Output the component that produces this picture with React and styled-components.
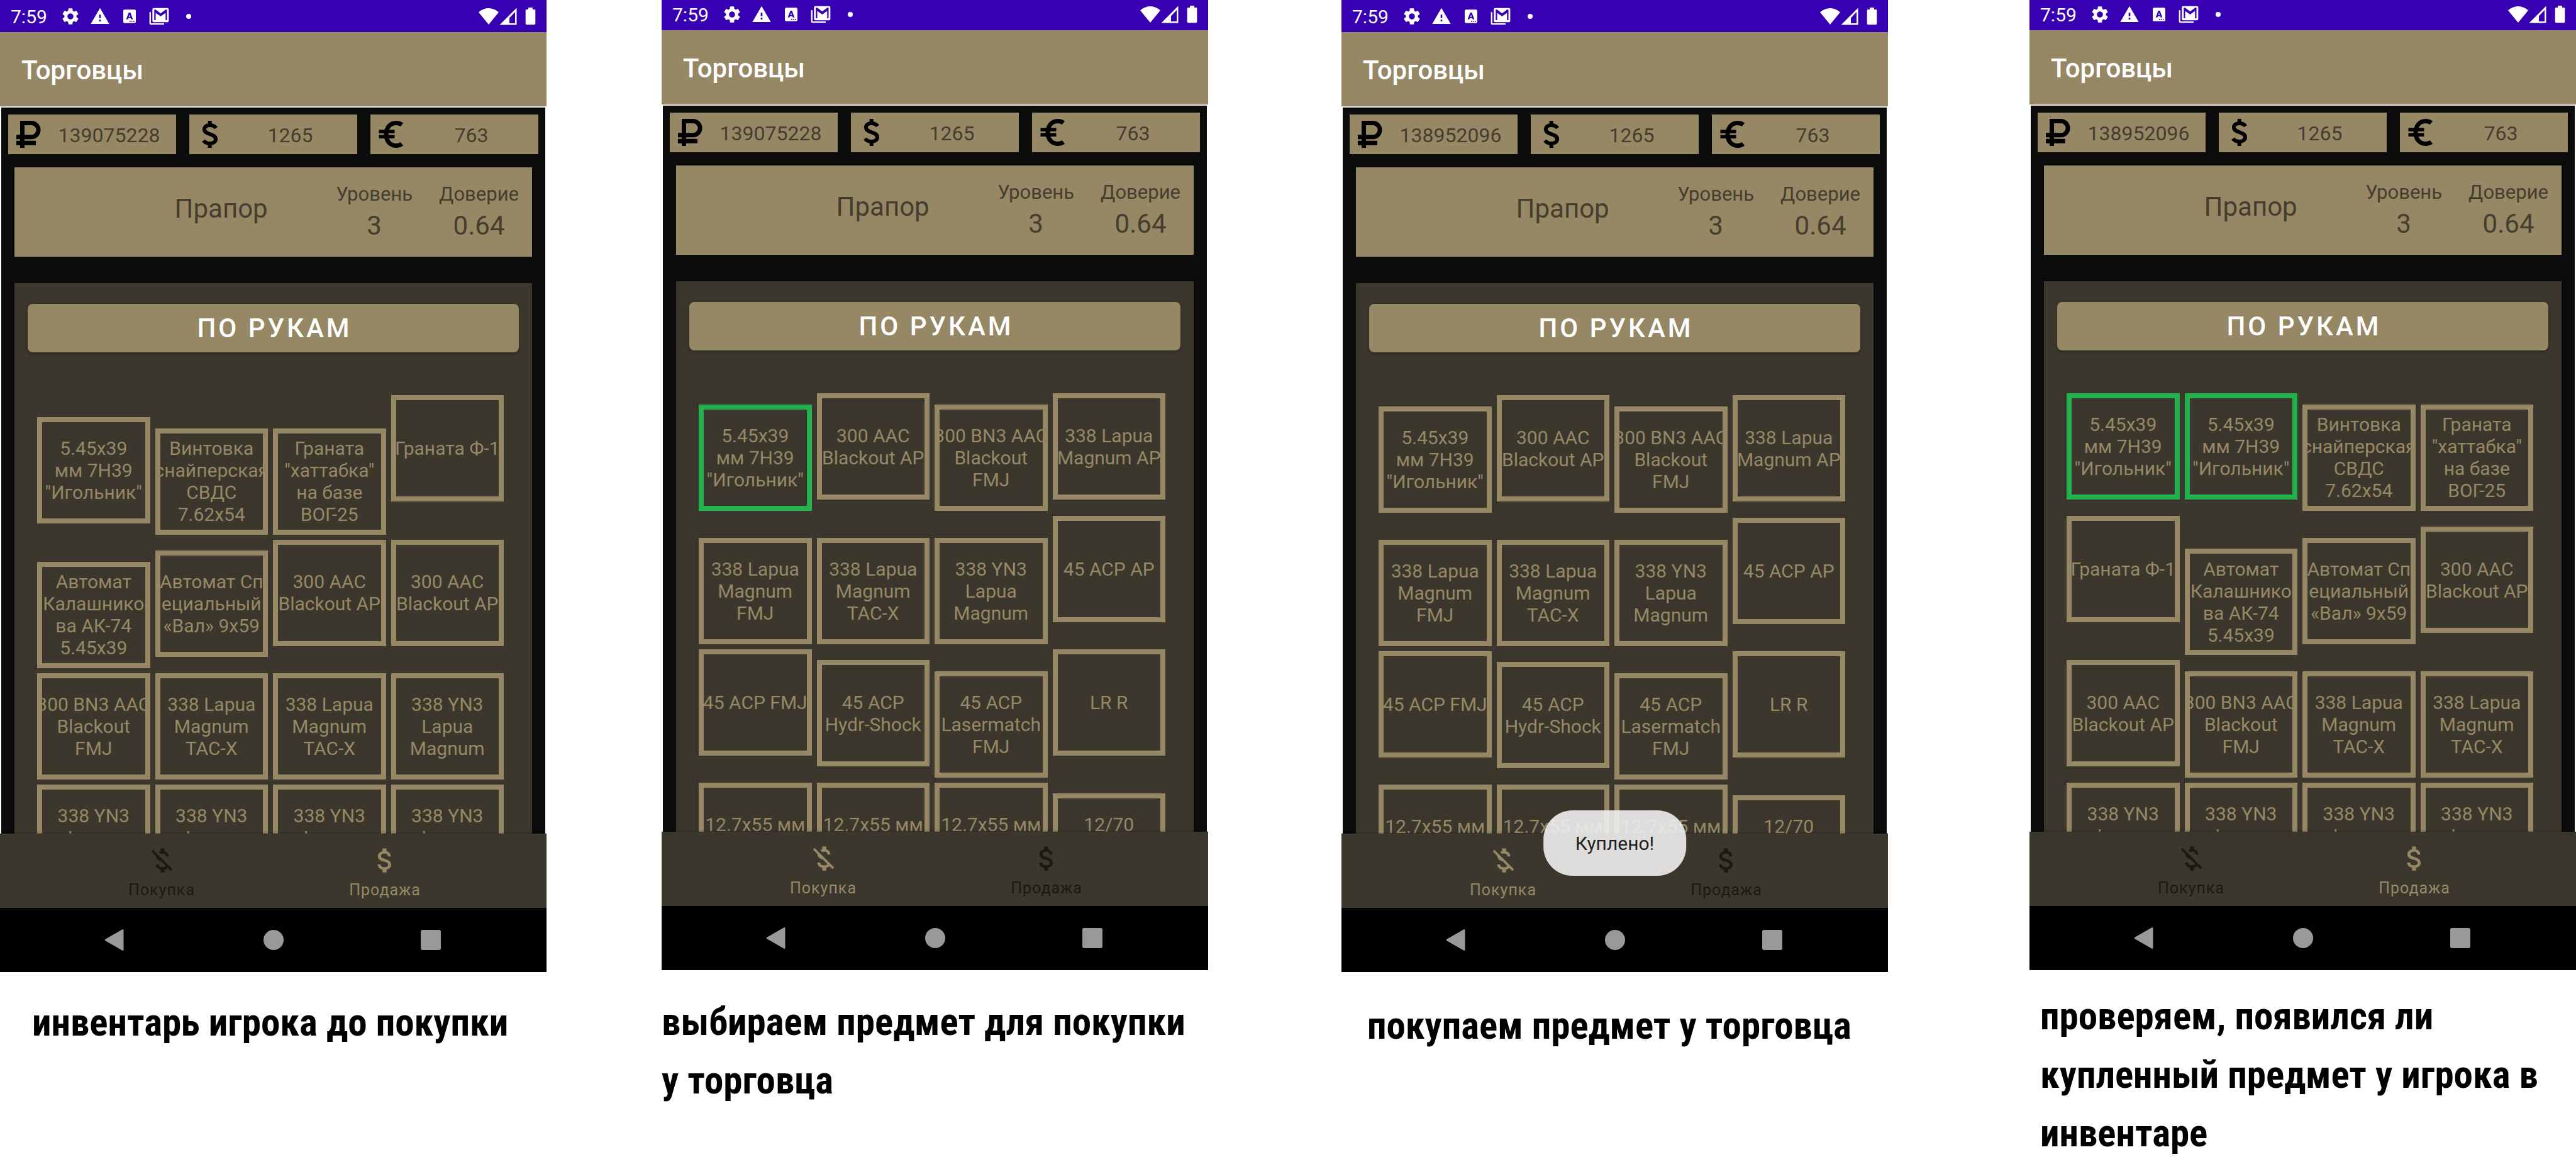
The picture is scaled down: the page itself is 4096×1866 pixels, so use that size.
import React from "react";
import styled, { createGlobalStyle } from "styled-components";
import { MdSettings, MdWarning, MdAttachMoney, MdMoneyOff } from "react-icons/md";

const color = {
  khaki: "#968765",
  panel: "#3c372d",
  ink: "#0b0b0b",
  textOnKhaki: "#453e2e",
  primaryDark: "#3700b3",
  picked: "#22b14c",
  system: "#999999",
  active: "#1b1915",
};

const GlobalStyle = createGlobalStyle`
  *, *::before, *::after { box-sizing: border-box; }
  body { margin: 0; background: #fff; font-family: Roboto, "Noto Sans", sans-serif; overflow: hidden; }
  button { font: inherit; color: inherit; background: none; border: 0; padding: 0; margin: 0; cursor: pointer; }
  h1, h2, p, dl, dt, dd { margin: 0; font: inherit; }
`;

const Board = styled.main`
  display: grid;
  grid-template-columns: 869fr 183fr 869fr 212fr 869fr 225fr 869fr;
  align-items: start;
`;

const Step = styled.figure`
  margin: 0;
  grid-column: ${(p) => p.$column};
`;

const Phone = styled.section`
  position: relative;
  display: flex;
  flex-direction: column;
  aspect-ratio: 9 / 16;
  margin-top: ${(p) => (p.$trimmed ? "-3px" : "0")};
  background: #fff;
  overflow: hidden;
`;

const StatusBar = styled.div`
  flex: none;
  display: flex;
  align-items: center;
  justify-content: space-between;
  height: 51px;
  padding: 0 11px 0 17px;
  background: ${color.primaryDark};
  color: #fff;
  font-size: 30px;
  line-height: 36px;
`;

const Notifications = styled.div`
  display: flex;
  align-items: center;
  gap: 15px;
  svg { display: block; width: 32px; height: 32px; }
`;

const Clock = styled.time`
  width: 64px;
  padding-top: 3px;
`;

const Signals = styled.div`
  display: flex;
  align-items: center;
  svg { display: block; height: 32px; }
  svg:last-child { margin-left: 5px; }
`;

const AppBar = styled.header`
  flex: none;
  display: flex;
  align-items: center;
  height: 118px;
  padding: 4px 34px 0;
  background: ${color.khaki};
`;

const AppTitle = styled.h1`
  color: #fff;
  font-size: 42px;
  font-weight: 500;
  line-height: 50px;
`;

const Body = styled.div`
  flex: 1;
  min-height: 0;
  display: flex;
  flex-direction: column;
  margin: 0 2px;
  border-top: 2px solid #e4e4e8;
  background: ${color.ink};
`;

const Wallet = styled.div`
  display: grid;
  grid-template-columns: repeat(3, 1fr);
  gap: 21px;
  padding: 11px 11px 0;
`;

const Purse = styled.div`
  display: flex;
  align-items: center;
  height: 63px;
  padding-left: 11px;
  background: ${color.khaki};
  color: ${color.textOnKhaki};
  font-size: 32px;
  line-height: 38px;
  svg { flex: none; display: block; width: 43px; height: 43px; }
  span { flex: 1; padding-top: 2px; text-align: center; }
`;

const Trader = styled.div`
  display: flex;
  align-items: center;
  gap: 42px;
  height: 142px;
  margin: 21px 21px 42px;
  padding-right: 21px;
  background: ${color.khaki};
  color: ${color.textOnKhaki};
`;

const TraderName = styled.h2`
  flex: 1;
  padding: 0 0 10px 188px;
  text-align: center;
  font-size: 42px;
  line-height: 50px;
`;

const Stat = styled.dl`
  display: grid;
  gap: 6px;
  text-align: center;
  dt { font-size: 31px; line-height: 38px; }
  dd { font-size: 42px; line-height: 50px; }
`;

const Panel = styled.div`
  flex: 1;
  min-height: 0;
  display: flex;
  flex-direction: column;
  margin: 0 21px;
  padding: 33px 21px 0;
  background: ${color.panel};
  overflow: hidden;
`;

const DealButton = styled.button`
  flex: none;
  height: 77px;
  padding-left: 4px;
  border-radius: 8px;
  background: ${color.khaki};
  box-shadow: 0 2px 5px rgba(0, 0, 0, 0.3);
  color: #fff;
  font-size: 42px;
  font-weight: 500;
  line-height: 50px;
  letter-spacing: 4px;
`;

const Items = styled.div`
  display: grid;
  grid-template-columns: repeat(4, 1fr);
  gap: 8px;
  align-items: baseline;
  padding: 68px 24px 0 15px;
`;

const Item = styled.button`
  display: flex;
  align-items: center;
  justify-content: center;
  height: 169px;
  min-width: 0;
  border: 8px solid ${(p) => (p.$picked ? color.picked : color.khaki)};
  color: ${color.khaki};
  font-size: 30px;
  line-height: 35px;
  text-align: center;
  white-space: pre;
  overflow: clip;
`;

const Tabs = styled.nav`
  flex: none;
  display: flex;
  justify-content: center;
  height: 118px;
  background: ${color.panel};
  box-shadow: 0 -1px 3px rgba(0, 0, 0, 0.25);
`;

const Tab = styled.button`
  display: flex;
  flex-direction: column;
  align-items: center;
  width: 355px;
  padding-top: 17px;
  gap: 7px;
  color: ${(p) => (p.$current ? color.active : color.khaki)};
  font-size: 25px;
  line-height: 30px;
  letter-spacing: 1px;
  svg { display: block; width: 51px; height: 51px; }
`;

const SystemKeys = styled.div`
  flex: none;
  display: flex;
  justify-content: center;
  height: 102px;
  background: #000;
`;

const SystemKey = styled.button`
  display: flex;
  align-items: center;
  justify-content: center;
  width: 251px;
  color: ${color.system};
  svg { display: block; width: 36px; height: 36px; }
`;

const Toast = styled.div`
  position: absolute;
  left: 50%;
  bottom: 153px;
  transform: translateX(-50%);
  display: flex;
  align-items: center;
  height: 104px;
  padding: 2px 51px 0;
  border-radius: 46px;
  background: rgba(239, 239, 239, 0.9);
  color: #1f1f1f;
  font-size: 30px;
  line-height: 35px;
`;

const Caption = styled.figcaption`
  padding: ${(p) => p.$top}px 0 0 ${(p) => p.$left}px;
  color: #000;
  font-family: "Roboto Condensed", "Liberation Sans Narrow", "Open Sans Condensed", Roboto, sans-serif;
  font-size: 61px;
  font-weight: 700;
  line-height: 93px;
  white-space: pre;
`;

const KeyboardIcon = () => (
  <svg viewBox="0 0 24 24" fill="currentColor" aria-hidden="true">
    <path fillRule="evenodd" d="M6 4h12a1.500 1.500 0 0 1 1.500 1.500v13A1.500 1.500 0 0 1 18 20H6a1.500 1.500 0 0 1-1.500-1.500v-13A1.500 1.500 0 0 1 6 4zM11 7.500 8 15.500h2l.5-1.500h3l.5 1.500h2L13 7.500zm1 2.500.9 2.500h-1.800zM12 17.300v1.200h1.200v-1.200zm2.200 0v1.200h1.200v-1.200zm2.200 0v1.200h1.200v-1.200z" />
  </svg>
);

const MailStackIcon = () => (
  <svg viewBox="0 0 24 24" fill="currentColor" aria-hidden="true">
    <path d="M.5 7h1.700v13.300H18V22H2A1.500 1.500 0 0 1 .5 20.500z" />
    <path fillRule="evenodd" d="M5.500 2h16.500A1.500 1.500 0 0 1 23.500 3.500v14A1.500 1.500 0 0 1 22 19H5.500A1.500 1.500 0 0 1 4 17.500v-14A1.500 1.500 0 0 1 5.500 2zM6.200 4v12.500h1.700V7.800l5.900 4.200 5.900-4.200v8.700h1.700V4h-1.600l-6 4.500L7.800 4z" />
  </svg>
);

const DotIcon = () => (
  <svg viewBox="0 0 24 24" fill="currentColor" aria-hidden="true"><circle cx="12" cy="12" r="3" /></svg>
);

const WifiIcon = () => (
  <svg viewBox="0 0 32 32" width="32" fill="currentColor" aria-hidden="true">
    <path d="M0 9.500C9 .8 23 .8 32 9.500L16 29z" />
  </svg>
);

const CellIcon = () => (
  <svg viewBox="0 0 30 32" width="30" fill="currentColor" aria-hidden="true">
    <path fillRule="evenodd" d="M28.500 2.500v27H1.500zM26 9 17 18.500v8.500h9z" />
  </svg>
);

const BatteryIcon = () => (
  <svg viewBox="0 0 30 32" width="30" fill="currentColor" aria-hidden="true">
    <path d="M12 2h7v3h2.500A1.800 1.800 0 0 1 23.300 6.800v20.600a1.800 1.800 0 0 1-1.800 1.800h-12a1.800 1.800 0 0 1-1.800-1.800V6.800A1.800 1.800 0 0 1 9.500 5H12z" />
  </svg>
);

const RubleIcon = () => (
  <svg viewBox="0 0 43 43" aria-hidden="true">
    <path d="M11.500 43V3.500H26a11 11 0 0 1 0 22.200H2M2 35.200h31" fill="none" stroke="#000" strokeWidth="7" />
  </svg>
);

const DollarIcon = () => (
  <svg viewBox="0 0 43 43" aria-hidden="true">
    <path d="M31.500 11.500C29.500 8.500 26 7 21.500 7c-5 0-8.500 2.500-8.500 6.500 0 9 18 6.500 18 15.500 0 4.500-4 7-9 7-4.500 0-8-1.500-10.500-4.800M21.700 0v8M21.700 35v8" fill="none" stroke="#000" strokeWidth="6" />
  </svg>
);

const EuroIcon = () => (
  <svg viewBox="0 0 43 43" aria-hidden="true">
    <path d="M39 6.200C36.500 4.300 33.500 3.500 29.500 3.500c-9 0-15.500 7.200-15.500 18s6.500 18 15.500 18c4 0 7-.8 9.500-2.700" fill="none" stroke="#000" strokeWidth="7" />
    <path d="M2.500 17h25M2.500 25.300h25" fill="none" stroke="#000" strokeWidth="5.500" />
  </svg>
);

const BackIcon = () => (
  <svg viewBox="0 0 36 36" fill="currentColor" aria-hidden="true">
    <path d="M28.500 1.300a1.500 1.500 0 0 1 2 1.400v30.600a1.500 1.500 0 0 1-2 1.400L1.500 19.200a1.400 1.400 0 0 1 0-2.400z" />
  </svg>
);

const HomeIcon = () => (
  <svg viewBox="0 0 36 36" fill="currentColor" aria-hidden="true"><circle cx="18" cy="18" r="16" /></svg>
);

const RecentIcon = () => (
  <svg viewBox="0 0 36 36" fill="currentColor" aria-hidden="true"><rect x="1" y="2" width="32" height="32" rx="3" /></svg>
);

const needle = '5.45x39\nмм 7H39\n"Игольник"';
const svds = "Винтовка\nснайперская\nСВДС\n7.62x54";
const hattabka = 'Граната\n"хаттабка"\nна базе\nВОГ-25';
const ak = "Автомат\nКалашнико\nва АК-74\n5.45x39";
const val = "Автомат Сп\nециальный\n«Вал» 9x59";
const blackoutAp = "300 AAC\nBlackout AP";
const blackoutFmj = "300 BN3 AAC\nBlackout\nFMJ";
const tacx = "338 Lapua\nMagnum\nTAC-X";
const yn3 = "338 YN3\nLapua\nMagnum";

const inventory = [
  svds, hattabka, "Граната Ф-1", ak, val, blackoutAp, blackoutAp, blackoutFmj, tacx, tacx, yn3, yn3, yn3, yn3, yn3,
];

const stock = [
  needle, blackoutAp, blackoutFmj, "338 Lapua\nMagnum AP",
  "338 Lapua\nMagnum\nFMJ", tacx, yn3, "45 ACP AP",
  "45 ACP FMJ", "45 ACP\nHydr-Shock", "45 ACP\nLasermatch\nFMJ", "LR R",
  "12.7x55 мм\nПС12", "12.7x55 мм\nПС12А", "12.7x55 мм\nПС12Б", "12/70\n5.25 мм\nкартечь",
];

const steps = [
  { column: 1, rubles: "139075228", tab: "buy", picked: 0, items: [needle, ...inventory], caption: "инвентарь игрока до покупки", left: 51, top: 34 },
  { column: 3, rubles: "139075228", tab: "sell", picked: 1, items: stock, trimmed: true, caption: "выбираем предмет для покупки\nу торговца", left: 0, top: 36 },
  { column: 5, rubles: "138952096", tab: "sell", picked: 0, items: stock, toast: "Куплено!", caption: "покупаем предмет у торговца", left: 41, top: 39 },
  {
    column: 7, rubles: "138952096", tab: "buy", picked: 2, trimmed: true, left: 17, top: 27,
    items: [needle, needle, svds, hattabka, "Граната Ф-1", ak, val, blackoutAp, blackoutAp, blackoutFmj, tacx, tacx, yn3, yn3, yn3, yn3],
    caption: "проверяем, появился ли\nкупленный предмет у игрока в\nинвентаре",
  },
];

function Screen({ step }) {
  return (
    <Phone $trimmed={step.trimmed}>
      <StatusBar>
        <Notifications>
          <Clock>7:59</Clock>
          <MdSettings />
          <MdWarning />
          <KeyboardIcon />
          <MailStackIcon />
          <DotIcon />
        </Notifications>
        <Signals>
          <WifiIcon />
          <CellIcon />
          <BatteryIcon />
        </Signals>
      </StatusBar>
      <AppBar>
        <AppTitle>Торговцы</AppTitle>
      </AppBar>
      <Body>
        <Wallet>
          <Purse><RubleIcon /><span>{step.rubles}</span></Purse>
          <Purse><DollarIcon /><span>1265</span></Purse>
          <Purse><EuroIcon /><span>763</span></Purse>
        </Wallet>
        <Trader>
          <TraderName>Прапор</TraderName>
          <Stat><dt>Уровень</dt><dd>3</dd></Stat>
          <Stat><dt>Доверие</dt><dd>0.64</dd></Stat>
        </Trader>
        <Panel>
          <DealButton type="button">ПО РУКАМ</DealButton>
          <Items>
            {step.items.map((name, i) => (
              <Item key={i} type="button" aria-pressed={i < step.picked} $picked={i < step.picked}>{name}</Item>
            ))}
          </Items>
        </Panel>
      </Body>
      <Tabs>
        <Tab type="button" $current={step.tab === "buy"}><MdMoneyOff />Покупка</Tab>
        <Tab type="button" $current={step.tab === "sell"}><MdAttachMoney />Продажа</Tab>
      </Tabs>
      <SystemKeys>
        <SystemKey type="button" aria-label="Назад"><BackIcon /></SystemKey>
        <SystemKey type="button" aria-label="Домой"><HomeIcon /></SystemKey>
        <SystemKey type="button" aria-label="Недавние"><RecentIcon /></SystemKey>
      </SystemKeys>
      {step.toast && <Toast role="status">{step.toast}</Toast>}
    </Phone>
  );
}

export default function App() {
  return (
    <>
      <GlobalStyle />
      <Board>
        {steps.map((step) => (
          <Step key={step.column} $column={step.column}>
            <Screen step={step} />
            <Caption $left={step.left} $top={step.top}>{step.caption}</Caption>
          </Step>
        ))}
      </Board>
    </>
  );
}
